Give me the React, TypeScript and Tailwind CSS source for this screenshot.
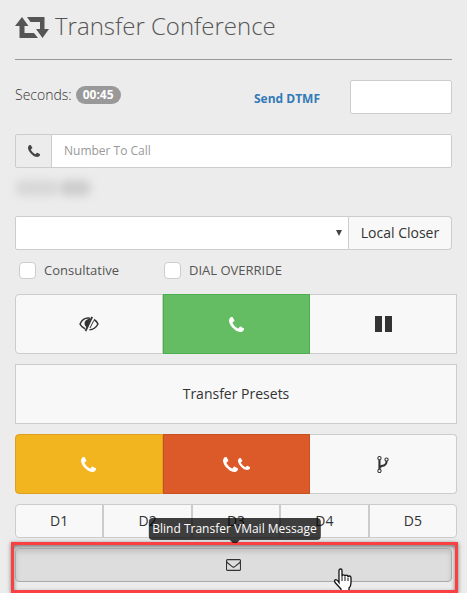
import { ReactNode, useState } from "react";
import clsx from "clsx";

type IconProps = {
  className?: string;
};

const RetweetIcon = ({ className }: IconProps) => (
  <svg viewBox="0 0 34 21" className={className} fill="currentColor" aria-hidden="true">
    <path d="M7 0l6.500 9H9.500v7H19l4 5H4.500V9H0zM12 0h17.500v12H34l-6.500 9L21 12h4V5h-9.500z" />
  </svg>
);

const PhoneIcon = ({ className }: IconProps) => (
  <svg viewBox="192 128 1408 1408" className={className} fill="currentColor" aria-hidden="true">
    <path d="M1600 1240q0 27-10 70.5t-21 68.5q-21 50-122 106-94 51-186 51-27 0-53-3.5t-57.5-12.5-47-14.5-55.5-20.5-49-18q-98-35-175-83-127-79-264-216t-216-264q-48-77-83-175-3-9-18-49t-20.5-55.5-14.5-47-12.5-57.5-3.5-53q0-92 51-186 56-101 106-122 25-11 68.500-21t70.500-10q14 0 21 3 18 6 53 76 11 19 30 54t35 63.500 31 53.500q3 4 17.500 25t21.500 35.500 7 28.500q0 20-28.500 50t-62 55-62 53-28.500 46q0 9 5 22.500t8.500 20.500 14 24 11.500 19q76 137 174 235t235 174q2 1 19 11.500t24 14 20.500 8.500 22.500 5q18 0 46-28.500t53-62 55-62 50-28.500q14 0 28.500 7t35.500 21.500 25 17.500q25 15 53.500 31t63.500 35 54 30q70 35 76 53 3 7 3 21z" />
  </svg>
);

const EnvelopeIcon = ({ className }: IconProps) => (
  <svg viewBox="0 256 1792 1408" className={className} fill="currentColor" aria-hidden="true">
    <path d="M1664 1504v-768q-32 36-69 66-268 206-426 338-51 43-83 67t-86.5 48.5-102.5 24.5h-2q-48 0-102.5-24.5t-86.5-48.5-83-67q-158-132-426-338-37-30-69-66v768q0 13 9.5 22.5t22.5 9.5h1472q13 0 22.5-9.5t9.5-22.5zm0-1051v-24.5l-.5-13-3-12.5-5.5-9-9-7.5-14-2.5h-1472q-13 0-22.5 9.5t-9.5 22.5q0 168 147 284 193 152 401 317 6 5 35 29.5t46 37.5 44.5 31.5 50.5 27.5 43 9h2q20 0 43-9t50.5-27.5 44.5-31.5 46-37.5 35-29.5q208-165 401-317 54-43 100.5-115.5t46.5-131.5zm128-37v1088q0 66-47 113t-113 47h-1472q-66 0-113-47t-47-113v-1088q0-66 47-113t113-47h1472q66 0 113 47t47 113z" />
  </svg>
);

const ForkIcon = ({ className }: IconProps) => (
  <svg viewBox="384 128 1024 1536" className={className} fill="currentColor" aria-hidden="true">
    <path d="M672 1472q0-40-28-68t-68-28-68 28-28 68 28 68 68 28 68-28 28-68zm0-1152q0-40-28-68t-68-28-68 28-28 68 28 68 68 28 68-28 28-68zm640 128q0-40-28-68t-68-28-68 28-28 68 28 68 68 28 68-28 28-68zm96 0q0 52-26 96.5t-70 69.5q-2 287-226 414-67 38-203 81-128 40-169.5 71t-41.5 100v26q44 25 70 69.5t26 96.5q0 80-56 136t-136 56-136-56-56-136q0-52 26-96.5t70-69.5v-820q-44-25-70-69.5t-26-96.5q0-80 56-136t136-56 136 56 56 136q0 52-26 96.5t-70 69.5v497q54-26 154-57 55-17 87.5-29.5t70.5-31 59-39.5 40.5-51 28-69.5 8.5-91.5q-44-25-70-69.5t-26-96.5q0-80 56-136t136-56 136 56 56 136z" />
  </svg>
);

const LowVisionIcon = ({ className }: IconProps) => (
  <svg viewBox="0 0 20 16" className={className} fill="none" stroke="currentColor" aria-hidden="true">
    <path d="M11 2.300Q4.500 1 1 8q1.700 3.500 5 4.800M15 3.500Q17.500 5 19 8q-3 5.500-8.500 5.700" strokeWidth="1.500" />
    <path d="M13.200 .8L6.500 15" strokeWidth="1.800" />
    <path d="M11.500 2.500Q5 3.500 5.500 8q.3 2.500 2.500 3.500z" fill="currentColor" stroke="none" />
    <path d="M14.800 4.500L11 12" strokeWidth="1" />
  </svg>
);

const PauseIcon = ({ className }: IconProps) => (
  <svg viewBox="0 0 17 16" className={className} fill="currentColor" aria-hidden="true">
    <path d="M0 0h7v16H0zM10 0h7v16h-7z" />
  </svg>
);

const HandCursor = ({ className }: IconProps) => (
  <svg viewBox="0 0 19 22" className={className} aria-hidden="true">
    <path
      d="M6 13V2.500Q6 1 7.500 1T9 2.500V8q0-1.200 1.500-1.200T12 8.200q0-1 1.500-1T15 9q0-1 1.400-1T18 9.500V15q0 3-2 5v4H8v-3L2.500 15Q1 13 2 12t3 1l1 1.500z"
      fill="#fff"
      stroke="#111"
      strokeWidth="1.300"
    />
    <path d="M9 8v5M12 8.500V13M15 9.500V13" stroke="#111" fill="none" />
  </svg>
);

type PanelButtonProps = {
  label: string;
  className: string;
  children: ReactNode;
};

const PanelButton = ({ label, className, children }: PanelButtonProps) => (
  <button
    aria-label={label}
    className={clsx("flex h-[60px] flex-1 items-center justify-center border", className)}
  >
    {children}
  </button>
);

const presets = ["D1", "D2", "D3", "D4", "D5"];

const App = () => {
  const [number, setNumber] = useState("");
  const [consultative, setConsultative] = useState(false);
  const [dialOverride, setDialOverride] = useState(false);

  return (
    <main className="bg-[#ececec] pt-2 font-['Open_Sans',sans-serif] text-sm text-[#333]">
      <div className="px-[15px]">
        <h1 className="flex h-[52px] items-start gap-1.5 border-b border-[#999] text-2xl leading-[35px] font-light text-[#555]">
          <RetweetIcon className="mt-[9px] h-[21px] w-[34px]" />
          Transfer Conference
        </h1>

        <div className="mt-5 flex h-[34px] items-start">
          <p className="flex flex-1 items-center gap-1 leading-[30px] font-light">
            Seconds:
            <span className="rounded-full bg-[#999] px-[7px] text-xs leading-[18px] font-bold text-white">00:45</span>
          </p>
          <a href="#dtmf" className="mr-[30px] text-xs leading-[38px] font-bold text-[#337ab7]">
            Send DTMF
          </a>
          <input aria-label="DTMF" className="h-[34px] w-[102px] rounded-xs border border-[#ccc] bg-white px-3" />
        </div>

        <div className="mt-5 flex h-[34px] rounded-xs border border-[#ccc]">
          <label htmlFor="number" className="flex w-9 items-center justify-center border-r border-[#ccc] text-[#444]">
            <PhoneIcon className="size-3" />
          </label>
          <input
            id="number"
            value={number}
            onChange={(e) => setNumber(e.target.value)}
            placeholder="Number To Call"
            className="min-w-0 flex-1 bg-white px-3 text-xs placeholder:text-[#999]"
          />
        </div>

        <div className="flex h-12 items-start pt-3">
          <span className="h-4 w-11 rounded-full bg-[#d8d8d8] blur-[4px]" />
          <span className="h-4 w-8 rounded-full bg-[#cdcdcd] blur-[4px]" />
        </div>

        <div className="flex h-[34px]">
          <div className="relative flex-1">
            <select
              aria-label="Closer group"
              className="h-full w-full appearance-none rounded-l-xs border border-[#ccc] bg-white px-3"
            />
            <svg viewBox="0 0 6 6" className="pointer-events-none absolute top-[14px] right-[7px] size-[6px] fill-[#444]">
              <path d="M0 0h6L3 6z" />
            </svg>
          </div>
          <button className="w-[103px] rounded-r-sm border border-l-0 border-[#ccc] bg-[#f8f8f8] text-sm">Local Closer</button>
        </div>
      </div>

      <div className="mt-[10px] flex h-5 items-center pl-[19px] text-[13px] text-[#555]">
        <label className="flex w-[145px] items-center gap-2">
          <input
            type="checkbox"
            checked={consultative}
            onChange={(e) => setConsultative(e.target.checked)}
            className="size-[17px] appearance-none rounded-sm border border-[#ccc] bg-white checked:bg-[#337ab7]"
          />
          Consultative
        </label>
        <label className="flex items-center gap-2">
          <input
            type="checkbox"
            checked={dialOverride}
            onChange={(e) => setDialOverride(e.target.checked)}
            className="size-[17px] appearance-none rounded-sm border border-[#ccc] bg-white checked:bg-[#337ab7]"
          />
          DIAL OVERRIDE
        </label>
      </div>

      <div className="mt-[14px] flex flex-col gap-[10px] pr-[10px] pl-[15px]">
        <div className="flex">
          <PanelButton label="Blind Transfer" className="rounded-l-sm border-[#ccc] bg-[#f8f8f8]">
            <LowVisionIcon className="h-4 w-5" />
          </PanelButton>
          <PanelButton label="Dial With Customer" className="border-[#4cae4c] bg-[#65bd63] text-white">
            <PhoneIcon className="size-[15px]" />
          </PanelButton>
          <PanelButton label="Park Customer Dial" className="border-l-0 border-[#ccc] bg-[#f8f8f8]">
            <PauseIcon className="h-4 w-[17px]" />
          </PanelButton>
        </div>

        <button className="h-[60px] border border-[#ccc] bg-[#f8f8f8] text-sm">Transfer Presets</button>

        <div className="flex">
          <PanelButton label="Hangup Xfer" className="rounded-l-sm border-[#dea01e] bg-[#f2b41f] text-white">
            <PhoneIcon className="size-[15px]" />
          </PanelButton>
          <PanelButton label="Hangup Both" className="border-[#c9501f] bg-[#dc5a29] text-white">
            <PhoneIcon className="size-[15px]" />
            <PhoneIcon className="size-3" />
          </PanelButton>
          <PanelButton label="Leave 3-Way Call" className="rounded-r-sm border-l-0 border-[#ccc] bg-[#f8f8f8]">
            <ForkIcon className="h-[17px] w-3" />
          </PanelButton>
        </div>

        <div className="flex h-[34px] divide-x-2 divide-[#ccc] rounded-sm border border-[#ccc] bg-[#f8f8f8]">
          {presets.map((preset) => (
            <button key={preset} className="flex-1">
              {preset}
            </button>
          ))}
        </div>
      </div>

      <div className="mt-1 pr-[9px] pl-[11px]">
        <div className="relative border-3 border-[#fa4040] pt-[3px] pr-[3px] pb-2 pl-px shadow-[0_1px_4px_rgba(0,0,0,0.5),inset_0_2px_4px_rgba(0,0,0,0.5)]">
          <button
            aria-label="Blind Transfer VMail Message"
            className="flex h-[34px] w-full items-center justify-center rounded-sm border border-[#aaa] bg-[#ddd] shadow-[inset_0_3px_5px_rgba(0,0,0,0.125)]"
          >
            <EnvelopeIcon className="h-3 w-[15px]" />
          </button>
          <div
            role="tooltip"
            className="absolute bottom-full left-1/2 mb-[5px] -translate-x-1/2 rounded-sm bg-black/75 px-1 text-xs leading-[22px] whitespace-nowrap text-white"
          >
            Blind Transfer VMail Message
            <svg viewBox="0 0 10 3" className="absolute top-full left-1/2 h-[3px] w-[10px] -translate-x-1/2 fill-black/75">
              <path d="M0 0h10L7 3H3z" />
            </svg>
          </div>
          <HandCursor className="absolute right-[103px] bottom-0 h-[22px] w-[19px]" />
        </div>
      </div>
    </main>
  );
};

export default App;
